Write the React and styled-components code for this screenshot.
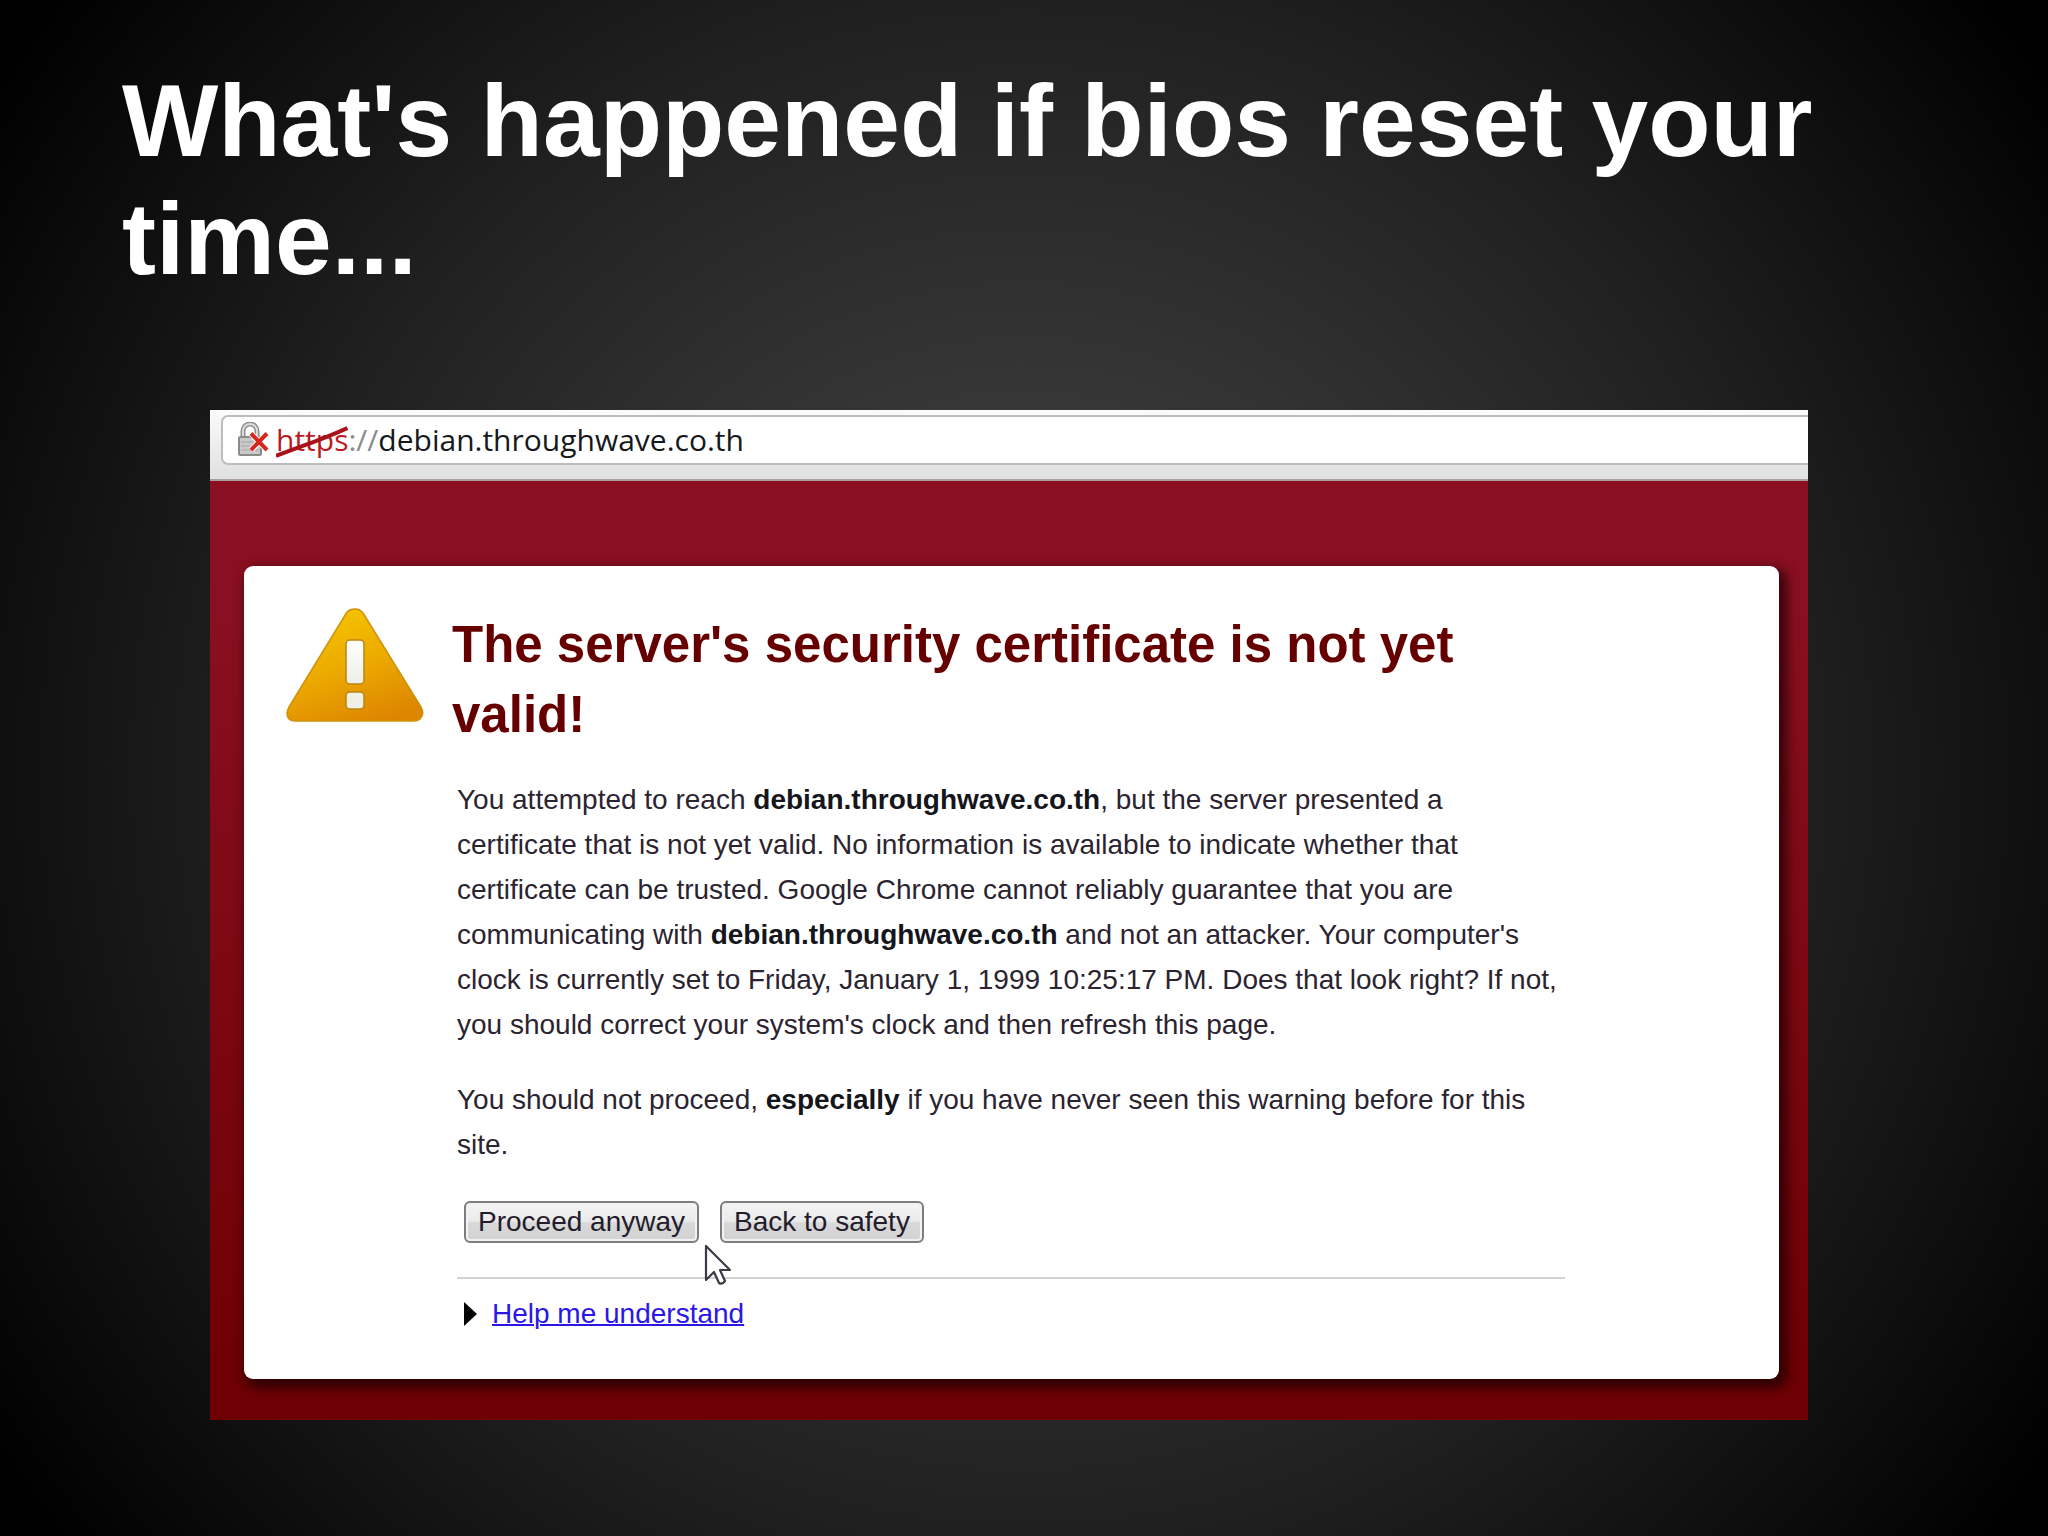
import React from "react";
import styled, { createGlobalStyle } from "styled-components";

const Global = createGlobalStyle`
  *, *::before, *::after { box-sizing: border-box; }
  html, body, #root { margin: 0; min-height: 100vh; }
  body { background: #000; font-family: "Liberation Sans", Arial, sans-serif; }
`;

const Slide = styled.main`
  min-height: 100vh;
  padding: 62px 240px 100px 210px;
  background: radial-gradient(circle farthest-corner at 50% 50%, #444 0%, #363636 29%, #202020 60%, #0f0f0f 80%, #000 97%);
`;

const Title = styled.h1`
  margin: 0 -60px 112px -88px;
  color: #fff;
  font-size: 102px;
  line-height: 118px;
  font-weight: 700;
`;

const Browser = styled.section`
  position: relative;
  background: linear-gradient(#8a0f20, #8a0f20 20%, #6e0004 96%);
`;

const Toolbar = styled.header`
  display: flex;
  height: 71px;
  padding: 5px 0 14px 11px;
  background: linear-gradient(#fbfbfb, #e0e0e0);
  border-bottom: 2px solid #a9a09e;
`;

const AddressBar = styled.div`
  flex: 1;
  display: flex;
  align-items: center;
  gap: 6px;
  padding-left: 15px;
  background: #fff;
  border: 2px solid #bdbdbd;
  border-right: 0;
  border-radius: 7px 0 0 7px;
`;

const Address = styled.span`
  color: #16181c;
  font: 30px/44px "Open Sans", "Noto Sans", sans-serif;
`;

const Scheme = styled.span`
  position: relative;
  color: #b81c22;
`;

const Slashes = styled.span`
  color: #8c8c8c;
`;

const Strike = styled.svg`
  position: absolute;
  left: 0;
  top: 6px;
  width: 100%;
  height: 34px;
`;

const Page = styled.div`
  padding: 85px 29px 41px 34px;
`;

const Card = styled.article`
  display: flex;
  gap: 33px;
  padding: 42px 0 43px 42px;
  background: #fff;
  border-radius: 9px;
  box-shadow: 5px 6px 12px 3px rgba(20, 0, 0, 0.7);
`;

const Content = styled.div`
  width: 1108px;
  padding-top: 2px;
`;

const Heading = styled.h2`
  margin: 0 0 27px -5px;
  color: #660000;
  font-size: 51px;
  line-height: 70px;
`;

const Paragraph = styled.p`
  margin: 0 0 30px;
  color: #2b2430;
  font-size: 28px;
  line-height: 45px;
  white-space: nowrap;

  b { color: #15151c; }
`;

const Actions = styled.div`
  display: flex;
  gap: 21px;
  padding: 4px 7px 34px;
  border-bottom: 2px solid #d3d3d3;
`;

const Button = styled.button`
  height: 42px;
  padding: 0 12px;
  border: 2px solid #7d7d7d;
  border-radius: 6px;
  background: linear-gradient(#f4f4f4 0%, #eaeaea 48%, #d9d9d9 52%, #d2d2d2 100%);
  box-shadow: inset 0 0 0 2px #f2f2f2;
  color: #241c2c;
  font: 28px/36px "Liberation Sans", Arial, sans-serif;
`;

const Help = styled.div`
  display: flex;
  align-items: center;
  gap: 15px;
  padding: 12px 7px 0;
`;

const HelpLink = styled.a`
  color: #2a16e6;
  font-size: 28px;
  line-height: 45px;
  text-decoration: underline;
  text-decoration-thickness: 2px;
`;

const Cursor = styled.svg`
  position: absolute;
  left: 494px;
  top: 833px;
`;

function LockIcon() {
  return (
    <svg width="32" height="36" viewBox="0 0 32 36" aria-hidden="true">
      <path d="M5 17V9a7 7 0 0 1 14 0v8" fill="none" stroke="#8d8d8d" strokeWidth="5" />
      <path d="M5 17V9a7 7 0 0 1 14 0v8" fill="none" stroke="#dcdcdc" strokeWidth="2" />
      <rect x="1" y="15" width="22" height="18" rx="1.5" fill="#c9c9c9" stroke="#8a8a8a" strokeWidth="2" />
      <path d="M3 20h18M3 24h18M3 28h18" stroke="#b2b2b2" strokeWidth="1.4" />
      <path d="M13 11.500L29 28M29 11.500L13 28" stroke="#fff" strokeWidth="6" />
      <path d="M13 11.500L29 28M29 11.500L13 28" stroke="#d8261c" strokeWidth="4" />
    </svg>
  );
}

function WarningIcon() {
  return (
    <svg width="138" height="114" viewBox="0 0 138 114" role="img" aria-label="Warning">
      <defs>
        <linearGradient id="amber" x1="0.3" y1="0" x2="0.7" y2="1">
          <stop offset="0" stopColor="#f5c400" />
          <stop offset="0.5" stopColor="#ecaa00" />
          <stop offset="1" stopColor="#dd8500" />
        </linearGradient>
        <linearGradient id="mark" x1="0" y1="0" x2="0" y2="1">
          <stop offset="0" stopColor="#fff" />
          <stop offset="1" stopColor="#eeeee6" />
        </linearGradient>
      </defs>
      <path
        d="M61 4Q64 1 69 1Q74 1 77 5L135 99Q139 106 134 111Q132 113 128 113H9Q5 113 3 111Q-1 106 3 99Z"
        fill="url(#amber)"
        stroke="#cf9208"
        strokeWidth="1.500"
      />
      <rect x="60" y="32" width="18" height="44" rx="4" fill="url(#mark)" stroke="#b8860b" strokeWidth="1.500" />
      <rect x="60" y="84" width="18" height="17" rx="4" fill="#f1f0e6" stroke="#b8860b" strokeWidth="1.500" />
    </svg>
  );
}

const host = "debian.throughwave.co.th";

export default function App() {
  return (
    <>
      <Global />
      <Slide>
        <Title>What's happened if bios reset your time...</Title>
        <Browser>
          <Toolbar>
            <AddressBar>
              <LockIcon />
              <Address>
                <Scheme>
                  https
                  <Strike viewBox="0 0 70 34" preserveAspectRatio="none" aria-hidden="true">
                    <path d="M0 31C22 22 44 15 69 3" fill="none" stroke="#a8121a" strokeWidth="4" />
                  </Strike>
                </Scheme>
                <Slashes>://</Slashes>
                {host}
              </Address>
            </AddressBar>
          </Toolbar>
          <Page>
            <Card>
              <WarningIcon />
              <Content>
                <Heading>The server's security certificate is not yet valid!</Heading>
                <Paragraph>
                  You attempted to reach <b>{host}</b>, but the server presented a<br />
                  certificate that is not yet valid. No information is available to indicate whether that<br />
                  certificate can be trusted. Google Chrome cannot reliably guarantee that you are<br />
                  communicating with <b>{host}</b> and not an attacker. Your computer's<br />
                  clock is currently set to Friday, January 1, 1999 10:25:17 PM. Does that look right? If not,<br />
                  you should correct your system's clock and then refresh this page.
                </Paragraph>
                <Paragraph>
                  You should not proceed, <b>especially</b> if you have never seen this warning before for this<br />
                  site.
                </Paragraph>
                <Actions>
                  <Button type="button">Proceed anyway</Button>
                  <Button type="button">Back to safety</Button>
                </Actions>
                <Help>
                  <svg width="13" height="24" viewBox="0 0 13 24" aria-hidden="true">
                    <path d="M0 0L13 12L0 24Z" fill="#000" />
                  </svg>
                  <HelpLink href="#help">Help me understand</HelpLink>
                </Help>
              </Content>
            </Card>
          </Page>
          <Cursor width="28" height="43" viewBox="0 0 28 43" aria-hidden="true">
            <path
              d="M2 3V37L10 29L15 40Q18 42 21 38L16 27H26Z"
              fill="#fff"
              stroke="#3c3a46"
              strokeWidth="2.200"
              strokeLinejoin="round"
            />
          </Cursor>
        </Browser>
      </Slide>
    </>
  );
}
